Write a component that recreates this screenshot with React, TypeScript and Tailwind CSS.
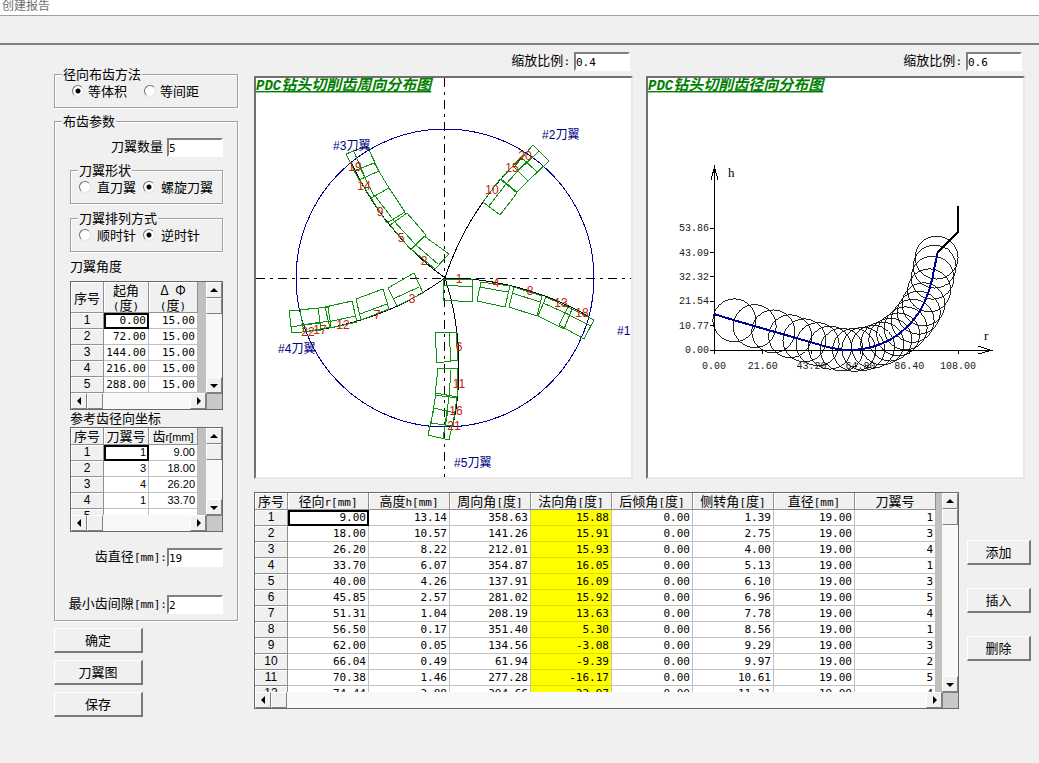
import { useState } from 'react';
import type { ReactNode } from 'react';

type Tooth = {
  no: string;
  // corners in order: blade side start, blade side end, back end, back start
  box: string;
  inner: [number, number, number, number];
  label: [number, number];
};

const angleRows = [
  ['0.00', '15.00'],
  ['72.00', '15.00'],
  ['144.00', '15.00'],
  ['216.00', '15.00'],
  ['288.00', '15.00'],
];

const refRows = [
  ['1', '9.00'],
  ['3', '18.00'],
  ['4', '26.20'],
  ['1', '33.70'],
  ['', ''],
];

const resultRows = [
  ['9.00', '13.14', '358.63', '15.88', '0.00', '1.39', '19.00', '1'],
  ['18.00', '10.57', '141.26', '15.91', '0.00', '2.75', '19.00', '3'],
  ['26.20', '8.22', '212.01', '15.93', '0.00', '4.00', '19.00', '4'],
  ['33.70', '6.07', '354.87', '16.05', '0.00', '5.13', '19.00', '1'],
  ['40.00', '4.26', '137.91', '16.09', '0.00', '6.10', '19.00', '3'],
  ['45.85', '2.57', '281.02', '15.92', '0.00', '6.96', '19.00', '5'],
  ['51.31', '1.04', '208.19', '13.63', '0.00', '7.78', '19.00', '4'],
  ['56.50', '0.17', '351.40', '5.30', '0.00', '8.56', '19.00', '1'],
  ['62.00', '0.05', '134.56', '-3.08', '0.00', '9.29', '19.00', '3'],
  ['66.04', '0.49', '61.94', '-9.39', '0.00', '9.97', '19.00', '2'],
  ['70.38', '1.46', '277.28', '-16.17', '0.00', '10.61', '19.00', '5'],
  ['74.44', '2.88', '204.66', '-22.97', '0.00', '11.21', '19.00', '4'],
];

// r, h of every cutter on the profile, in mm
const profile: [number, number][] = [
  [9, 13.14],
  [18, 10.57],
  [26.2, 8.22],
  [33.7, 6.07],
  [40, 4.26],
  [45.85, 2.57],
  [51.31, 1.04],
  [56.5, 0.17],
  [62, 0.05],
  [66.04, 0.49],
  [70.38, 1.46],
  [74.44, 2.88],
  [78, 4.6],
  [81.5, 6.9],
  [84.8, 9.6],
  [87.9, 12.9],
  [90.6, 16.5],
  [92.7, 20.2],
  [95.2, 26.4],
  [96.7, 32],
  [97.6, 36.9],
  [98.5, 40.9],
];

const teeth: Tooth[] = [
  { no: '1', box: '443,279 473,279 472,302 443,300', inner: [443, 285, 473, 287], label: [459, 279] },
  { no: '4', box: '481,282 510,286 505,307 477,301', inner: [479, 287, 508, 292], label: [496, 283] },
  { no: '8', box: '514,287 542,296 537,316 509,307', inner: [512, 293, 540, 302], label: [530, 291] },
  { no: '13', box: '546,297 572,309 564,329 538,316', inner: [543, 303, 570, 315], label: [561, 303] },
  { no: '18', box: '568,307 594,320 584,339 559,325', inner: [565, 313, 591, 326], label: [582, 313] },
  { no: '10', box: '483,202 500,179 517,193 500,215', inner: [489, 206, 506, 184], label: [492, 190] },
  { no: '15', box: '501,179 521,157 537,172 517,192', inner: [506, 184, 526, 162], label: [512, 168] },
  { no: '20', box: '514,167 533,145 549,161 528,181', inner: [518, 171, 539, 151], label: [525, 156] },
  { no: '19', box: '359,180 346,154 367,146 379,171', inner: [365, 177, 354, 152], label: [355, 167] },
  { no: '14', box: '371,198 354,171 374,163 389,188', inner: [374, 196, 360, 168], label: [364, 186] },
  { no: '9', box: '387,223 371,198 389,188 405,212', inner: [392, 218, 375, 196], label: [380, 212] },
  { no: '5', box: '411,250 390,225 407,213 426,235', inner: [415, 244, 393, 220], label: [401, 238] },
  { no: '2', box: '435,269 411,249 424,236 449,254', inner: [438, 264, 416, 245], label: [424, 261] },
  { no: '3', box: '388,288 414,273 423,293 397,306', inner: [393, 299, 419, 287], label: [412, 299] },
  { no: '7', box: '356,299 383,289 389,309 361,320', inner: [360, 314, 387, 304], label: [377, 315] },
  { no: '12', box: '325,307 352,301 357,322 330,328', inner: [327, 322, 356, 316], label: [343, 325] },
  { no: '17', box: '300,310 328,307 331,327 304,332', inner: [301, 325, 330, 321], label: [320, 330] },
  { no: '22', box: '289,311 318,308 321,330 292,333', inner: [290, 327, 320, 323], label: [308, 332] },
  { no: '6', box: '435,333 456,332 458,360 437,363', inner: [449, 333, 451, 361], label: [459, 347] },
  { no: '11', box: '438,368 458,369 457,398 435,395', inner: [451, 370, 449, 397], label: [459, 384] },
  { no: '16', box: '436,393 457,397 453,426 431,423', inner: [449, 397, 445, 425], label: [456, 411] },
  { no: '21', box: '434,408 455,413 449,440 428,435', inner: [448, 411, 443, 438], label: [454, 426] },
];

const bladeLabels: [string, number, number][] = [
  ['1', 617, 335],
  ['2', 542, 139],
  ['3', 333, 150],
  ['4', 278, 353],
  ['5', 454, 467],
];

const CX = 445;
const CY = 278;
const RADIUS = 149;

// Each blade turns 15 degrees clockwise from the centre to the rim
function bladePath(startDeg: number) {
  const pts: string[] = [];
  for (let r = 0; r <= RADIUS; r += RADIUS / 16) {
    const a = ((startDeg - (15 * r) / RADIUS) * Math.PI) / 180;
    pts.push(`${(CX + r * Math.cos(a)).toFixed(1)},${(CY - r * Math.sin(a)).toFixed(1)}`);
  }
  return pts.join(' ');
}

const SCALE = 2.26;
const px = (r: number) => 714 + r * SCALE;
const py = (h: number) => 350 - h * SCALE;

const MONO = "font-['DejaVu_Sans_Mono',monospace]";
const SANS = "font-['Liberation_Sans',sans-serif]";

// CJK runs at 13px, latin runs smaller in their own face
function Mixed({ text, latin = MONO }: { text: string; latin?: string }) {
  return (
    <>
      {text.split(/([\x20-\x7e]+)/).map((part, i) =>
        i % 2 ? (
          <span key={i} className={`text-[11px] leading-none ${latin}`}>
            {part}
          </span>
        ) : (
          part
        )
      )}
    </>
  );
}

function GroupBox({
  title,
  className,
  bodyClass,
  children,
}: {
  title: string;
  className?: string;
  bodyClass: string;
  children: ReactNode;
}) {
  return (
    <fieldset
      className={`min-w-0 border border-[#a0a0a0] shadow-[1px_1px_0_#fff,inset_1px_1px_0_#fff] ${className ?? ''}`}
    >
      <legend className="ml-[7px] bg-[#f0f0f0] px-px leading-[18px]">{title}</legend>
      <div className={bodyClass}>{children}</div>
    </fieldset>
  );
}

function RadioRow({
  name,
  options,
  initial,
  itemClass,
}: {
  name: string;
  options: string[];
  initial: string;
  itemClass: string;
}) {
  const [value, setValue] = useState(initial);
  return (
    <div className="flex h-4">
      {options.map((opt) => (
        <label key={opt} className={`flex shrink-0 items-center whitespace-nowrap ${itemClass}`}>
          <input
            type="radio"
            name={name}
            checked={value === opt}
            onChange={() => setValue(opt)}
            className="h-3 w-3 shrink-0 appearance-none rounded-full border border-t-[#707070] border-r-[#e3e3e3] border-b-[#e3e3e3] border-l-[#707070] bg-white checked:bg-[radial-gradient(circle,#000_2px,#fff_3px)]"
          />
          {opt}
        </label>
      ))}
    </div>
  );
}

function Field({
  id,
  label,
  initial,
  className,
}: {
  id: string;
  label: string;
  initial: string;
  className: string;
}) {
  return (
    <div className={`flex items-start justify-end ${className}`}>
      <label htmlFor={id} className="leading-4 whitespace-nowrap">
        <Mixed text={label} />
      </label>
      <input
        id={id}
        type="text"
        defaultValue={initial}
        className="h-[19px] w-14 rounded-none border-2 border-t-[#808080] border-r-white border-b-white border-l-[#808080] bg-white pt-0.5 font-['DejaVu_Sans_Mono',monospace] text-[11px] outline-none"
      />
    </div>
  );
}

function PushButton({ label, className }: { label: string; className: string }) {
  return (
    <button
      type="button"
      className={`h-[25px] border-t border-r-2 border-b-2 border-l border-t-white border-r-[#787878] border-b-[#787878] border-l-white bg-[#f0f0f0] text-center leading-5 active:border-t-[#787878] active:border-l-[#787878] ${className}`}
    >
      {label}
    </button>
  );
}

const arrows = {
  up: 'M3 9 L7 5 L11 9 Z',
  down: 'M3 6 L11 6 L7 10 Z',
  left: 'M9 3 L9 11 L5 7 Z',
  right: 'M6 3 L10 7 L6 11 Z',
};

function ScrollButton({ dir }: { dir: keyof typeof arrows }) {
  return (
    <button
      type="button"
      aria-label={`scroll ${dir}`}
      className="h-4 w-4 shrink-0 border border-t-white border-r-[#808080] border-b-[#808080] border-l-white bg-[#f0f0f0]"
    >
      <svg viewBox="0 0 14 14" className="block h-3.5 w-3.5">
        <path d={arrows[dir]} fill="#000" />
      </svg>
    </button>
  );
}

function Thumb() {
  return (
    <div className="h-4 w-4 shrink-0 border border-t-white border-r-[#808080] border-b-[#808080] border-l-white bg-[#f0f0f0]" />
  );
}

function DataGrid({
  label,
  headers,
  rows,
  cols,
  headClass,
  viewClass,
  font,
  markedCol,
}: {
  label: string;
  headers: string[];
  rows: string[][];
  cols: string[];
  headClass: string;
  viewClass: string;
  font: string;
  markedCol?: number;
}) {
  const headCell =
    'border-r border-b border-[#909090] bg-[#f0f0f0] p-0 text-center font-normal shadow-[inset_1px_1px_0_#fff]';
  return (
    <div className="border border-[#696969] bg-[#f8f8f8]">
      <div className="flex">
        <div className={`min-w-0 flex-1 overflow-hidden bg-[#c0c0c0] ${viewClass}`}>
          <table aria-label={label} className="w-full table-fixed border-separate border-spacing-0 bg-white">
            <colgroup>
              {cols.map((c, i) => (
                <col key={i} className={c} />
              ))}
            </colgroup>
            <thead>
              <tr className={headClass}>
                {headers.map((h) => (
                  <th key={h} scope="col" className={`whitespace-pre-line ${headCell}`}>
                    <Mixed text={h} latin={font} />
                  </th>
                ))}
              </tr>
            </thead>
            <tbody>
              {rows.map((row, r) => (
                <tr key={r} className="h-4 leading-[15px]">
                  <th scope="row" className={`text-xs leading-[15px] ${SANS} ${headCell}`}>
                    {r + 1}
                  </th>
                  {row.map((cell, c) => (
                    <td
                      key={c}
                      className={`border-r border-b border-[#c0c0c0] p-0 pr-0.5 text-right text-[11px] ${font} ${
                        c === markedCol ? 'border-b-[#e0e000] bg-[#ffff00]' : ''
                      } ${r === 0 && c === 0 ? 'outline-2 -outline-offset-2 outline-black' : ''}`}
                    >
                      {cell}
                    </td>
                  ))}
                </tr>
              ))}
            </tbody>
          </table>
        </div>
        <div className="flex w-4 shrink-0 flex-col">
          <ScrollButton dir="up" />
          <Thumb />
          <div className="flex-1" />
          <ScrollButton dir="down" />
        </div>
      </div>
      <div className="flex">
        <ScrollButton dir="left" />
        <Thumb />
        <div className="flex-1" />
        <ScrollButton dir="right" />
        <div className="h-4 w-4 border-t border-l border-[#808080] bg-[#c8c8c8]" />
      </div>
    </div>
  );
}

function PlotTitle({ x, text }: { x: number; text: string }) {
  return (
    <text
      x={x}
      y={90}
      fill="#008000"
      className="font-['Liberation_Mono','Noto_Sans_CJK_SC',monospace] text-[15px] font-bold italic underline"
    >
      <tspan className="text-sm">PDC</tspan>
      {text}
    </text>
  );
}

function BladePlot() {
  return (
    <svg viewBox="256 78 375 399" className="block h-auto w-full" shapeRendering="crispEdges">
      <PlotTitle x={256} text="钻头切削齿周向分布图" />
      <g stroke="#000" strokeDasharray="9 5 3 5">
        <line x1="256" y1="278.5" x2="632" y2="278.5" />
        <line x1="444.5" y1="78" x2="444.5" y2="478" />
      </g>
      <circle cx={CX} cy={CY} r={RADIUS} fill="none" stroke="#000090" />
      <g fill="none" stroke="#000">
        {angleRows.map(([start]) => (
          <polyline key={start} points={bladePath(Number(start))} />
        ))}
      </g>
      <g fill="none" stroke="#109010">
        {teeth.map((t) => (
          <g key={t.no}>
            <polygon points={t.box} />
            <line x1={t.inner[0]} y1={t.inner[1]} x2={t.inner[2]} y2={t.inner[3]} />
          </g>
        ))}
      </g>
      <g fill="#c02010" textAnchor="middle" className="font-['Liberation_Sans',sans-serif] text-xs">
        {teeth.map((t) => (
          <text key={t.no} x={t.label[0]} y={t.label[1] + 4}>
            {t.no}
          </text>
        ))}
      </g>
      <g fill="#000080" className="font-['Liberation_Sans','Noto_Sans_CJK_SC',sans-serif] text-xs">
        {bladeLabels.map(([n, x, y]) => (
          <text key={n} x={x} y={y}>
            #{n}刀翼
          </text>
        ))}
      </g>
    </svg>
  );
}

function ProfilePlot() {
  const yTicks = ['0.00', '10.77', '21.54', '32.32', '43.09', '53.86'];
  const xTicks = ['0.00', '21.60', '43.20', '64.80', '86.40', '108.00'];
  const curve = profile.map(([r, h]) => `${px(r).toFixed(1)},${py(h).toFixed(1)}`).join(' ');
  return (
    <svg viewBox="648 78 375 399" className="block h-auto w-full" shapeRendering="crispEdges">
      <PlotTitle x={648} text="钻头切削齿径向分布图" />
      <g fill="#202020" className="font-['Liberation_Mono',monospace] text-[10px]">
        {yTicks.map((t) => (
          <text key={t} x="709" y={py(Number(t)) + 3} textAnchor="end">
            {t}
          </text>
        ))}
        {xTicks.map((t) => (
          <text key={t} x={px(Number(t))} y="369" textAnchor="middle">
            {t}
          </text>
        ))}
      </g>
      <g fill="#000" className="font-['Liberation_Serif',serif] text-[13px]">
        <text x="728" y="177">h</text>
        <text x="984" y="340">r</text>
      </g>
      <g fill="none" stroke="#000">
        <path d="M714.5 166.5 V354 M710 350.5 H991 M711 180 L714.5 167 L718 180 M978 346 L991 350.5 L978 354" />
        {yTicks.map((t) => (
          <line key={t} x1="710" x2="714" y1={py(Number(t))} y2={py(Number(t))} />
        ))}
        {xTicks.map((t) => (
          <line key={t} x1={px(Number(t))} x2={px(Number(t))} y1="350" y2="354" />
        ))}
      </g>
      <g fill="none" stroke="#000" strokeWidth="0.85">
        {profile.map(([r, h]) => (
          <circle key={r} cx={px(r)} cy={py(h)} r={9.5 * SCALE} />
        ))}
      </g>
      <polyline points={`714,314 ${curve} 937,253`} fill="none" stroke="#000090" strokeWidth="2" />
      <polyline points="937,253 958,232 958,206" fill="none" stroke="#000" strokeWidth="2" />
    </svg>
  );
}

function PlotPanel({ id, zoom, children }: { id: string; zoom: string; children: ReactNode }) {
  return (
    <section className="min-w-0 flex-1">
      <Field id={id} label="缩放比例:" initial={zoom} className="gap-1 pr-[3px]" />
      <div className="mt-[5px] border-2 border-t-[#707070] border-r-[#e8e8e8] border-b-[#e8e8e8] border-l-[#707070] bg-white">
        {children}
      </div>
    </section>
  );
}

export default function App() {
  return (
    <div className="min-h-screen bg-[#f0f0f0] font-['Noto_Sans_CJK_SC',sans-serif] text-[13px] text-black">
      <header className="h-4 border-b border-[#a0a0a0] bg-white pl-0.5 text-xs leading-[9px] text-[#707070]">
        创建报告
      </header>
      <div className="h-[29px] border-b-2 border-[#808080]" />

      <main className="flex gap-4 pr-2 pl-[54px]">
        <aside className="w-[184px] shrink-0 pt-5">
          <GroupBox title="径向布齿方法" bodyClass="pb-2 pl-[17px]">
            <RadioRow
              name="method"
              options={['等体积', '等间距']}
              initial="等体积"
              itemClass="w-[72px] gap-1"
            />
          </GroupBox>

          <GroupBox title="布齿参数" className="mt-1" bodyClass="pr-3.5 pb-1.5 pl-[15px]">
            <Field id="blades" label="刀翼数量" initial="5" className="gap-1 pt-2" />

            <GroupBox title="刀翼形状" className="mt-1" bodyClass="pb-2 pl-2">
              <RadioRow
                name="shape"
                options={['直刀翼', '螺旋刀翼']}
                initial="螺旋刀翼"
                itemClass="w-16 gap-1.5"
              />
            </GroupBox>

            <GroupBox title="刀翼排列方式" className="mt-[5px]" bodyClass="pb-2 pl-2">
              <RadioRow
                name="direction"
                options={['顺时针', '逆时针']}
                initial="逆时针"
                itemClass="w-16 gap-1.5"
              />
            </GroupBox>

            <h2 className="mt-1.5 mb-[7px] leading-4">刀翼角度</h2>
            <DataGrid
              label="刀翼角度"
              headers={['序号', '起角\n(度)', 'Δ Φ\n(度)']}
              rows={angleRows}
              cols={['w-[33px]', 'w-[45px]', 'w-[49px]']}
              headClass="h-[31px] leading-[15px]"
              viewClass="h-[111px] pr-2"
              font={MONO}
            />

            <h2 className="pb-px leading-4">参考齿径向坐标</h2>
            <DataGrid
              label="参考齿径向坐标"
              headers={['序号', '刀翼号', '齿r[mm]']}
              rows={refRows}
              cols={['w-[33px]', 'w-[45px]', 'w-[49px]']}
              headClass="h-[17px] leading-4"
              viewClass="h-[87px] pr-2"
              font={SANS}
            />

            <Field id="diameter" label="齿直径[mm]:" initial="19" className="mt-4" />
            <Field id="gap" label="最小齿间隙[mm]:" initial="2" className="mt-7" />
          </GroupBox>

          <div className="mt-[7px] flex flex-col gap-[7px]">
            <PushButton label="确定" className="w-[89px]" />
            <PushButton label="刀翼图" className="w-[89px]" />
            <PushButton label="保存" className="w-[89px]" />
          </div>
        </aside>

        <div className="min-w-0 flex-1 pt-[7px]">
          <div className="mr-1.5 flex gap-[13px]">
            <PlotPanel id="zoom-blades" zoom="0.4">
              <BladePlot />
            </PlotPanel>
            <PlotPanel id="zoom-profile" zoom="0.6">
              <ProfilePlot />
            </PlotPanel>
          </div>

          <div className="mt-[13px] flex gap-2">
            <div className="min-w-0 flex-1">
              <DataGrid
                label="布齿结果"
                headers={[
                  '序号',
                  '径向r[mm]',
                  '高度h[mm]',
                  '周向角[度]',
                  '法向角[度]',
                  '后倾角[度]',
                  '侧转角[度]',
                  '直径[mm]',
                  '刀翼号',
                ]}
                rows={resultRows}
                cols={['w-[33px]', '', '', '', '', '', '', '', '']}
                headClass="h-[17px] leading-4"
                viewClass="h-[199px] pr-1.5"
                font={MONO}
                markedCol={3}
              />
            </div>
            <div className="flex w-16 shrink-0 flex-col gap-[23px] pt-12">
              <PushButton label="添加" className="w-full" />
              <PushButton label="插入" className="w-full" />
              <PushButton label="删除" className="w-full" />
            </div>
          </div>
        </div>
      </main>
    </div>
  );
}
